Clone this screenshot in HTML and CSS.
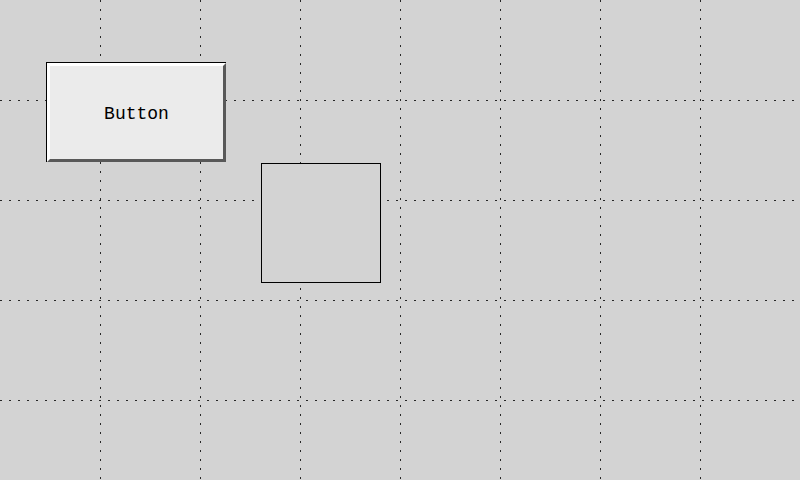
FILE: index.html
```
<!DOCTYPE html>
<html lang="en">
<head>
<meta charset="utf-8">
<title>Canvas</title>
<link rel="stylesheet" href="styles.css">
</head>
<body>
<main class="canvas">
  <svg class="grid" aria-hidden="true">
    <defs>
      <pattern id="row-dots" width="9" height="100" patternUnits="userSpaceOnUse"><rect width="2" height="1"/></pattern>
      <pattern id="column-dots" width="100" height="9" patternUnits="userSpaceOnUse"><rect width="1" height="2"/></pattern>
    </defs>
    <rect y="100" width="100%" height="100%" fill="url(#row-dots)"/>
    <rect x="100" width="100%" height="100%" fill="url(#column-dots)"/>
  </svg>
  <button class="push-button" type="button">Button</button>
  <div class="box"></div>
</main>
</body>
</html>
```

FILE: styles.css
```
body {
  margin: 0;
  background: #d3d3d3;
}

.canvas {
  position: relative;
  min-height: 100vh;
  overflow: hidden;
}

.grid {
  position: absolute;
  inset: 0;
  width: 100%;
  height: 100%;
  fill: #262626;
  shape-rendering: crispEdges;
}

.push-button {
  position: absolute;
  left: 47px;
  top: 63px;
  width: 179px;
  height: 99px;
  padding: 2px 0 0;
  border: 3px solid;
  border-color: #fff #585858 #585858 #fff;
  background: #ebebeb;
  box-shadow: -1px -1px #000, -1px 0 #000, 0 -1px #000;
  color: #000;
  font: 18px "Liberation Mono", monospace;
}

.box {
  position: absolute;
  left: 261px;
  top: 163px;
  box-sizing: border-box;
  width: 120px;
  height: 120px;
  border: 1px solid #000;
  background: #d3d3d3;
}
```
